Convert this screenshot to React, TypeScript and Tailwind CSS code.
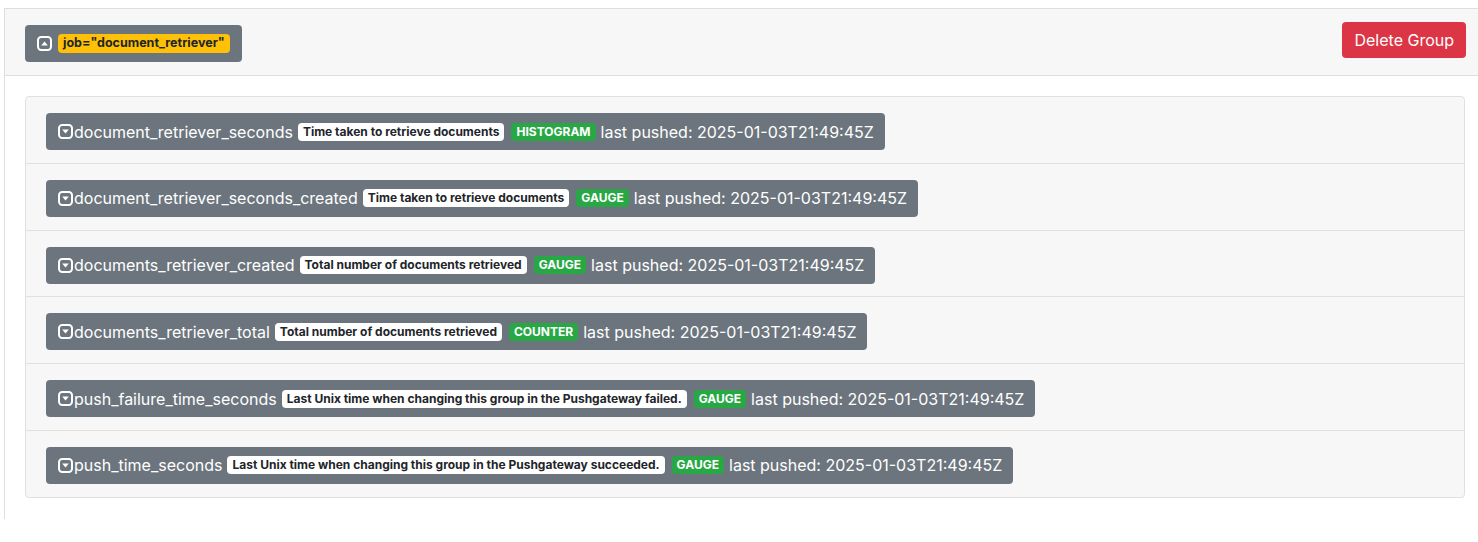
import React from "react";

const font = { fontFamily: 'Inter, "Liberation Sans", Arial, sans-serif' };

function CaretSquare({ up = false }: { up?: boolean }) {
  return (
    <svg width="15" height="15" viewBox="0 0 15 15" className="inline-block shrink-0">
      <rect x="1" y="1" width="13" height="13" rx="3.2" ry="3.2" fill="none" stroke="white" strokeWidth="2" />
      {up ? (
        <path d="M4.2 9.6 L7.5 5.6 L10.8 9.6 Z" fill="white" />
      ) : (
        <path d="M4.2 5.6 L7.5 9.6 L10.8 5.6 Z" fill="white" />
      )}
    </svg>
  );
}

type Metric = { name: string; help: string; type: string };

const metrics: Metric[] = [
  { name: "document_retriever_seconds", help: "Time taken to retrieve documents", type: "HISTOGRAM" },
  { name: "document_retriever_seconds_created", help: "Time taken to retrieve documents", type: "GAUGE" },
  { name: "documents_retriever_created", help: "Total number of documents retrieved", type: "GAUGE" },
  { name: "documents_retriever_total", help: "Total number of documents retrieved", type: "COUNTER" },
  { name: "push_failure_time_seconds", help: "Last Unix time when changing this group in the Pushgateway failed.", type: "GAUGE" },
  { name: "push_time_seconds", help: "Last Unix time when changing this group in the Pushgateway succeeded.", type: "GAUGE" },
];

export default function App() {
  return (
    <div className="w-[1478px] h-[542px] overflow-hidden bg-white text-[#212529]" style={font}>
      <div className="mt-2 ml-1 w-[1482px] border-l border-t border-[#dedede]">
        <div className="h-[67px] bg-[#f7f7f7] border-b border-[#dedede] flex justify-between items-start px-5">
          <div className="mt-4 h-[37px] inline-flex items-center gap-[6px] px-3 rounded bg-[#6c757d] text-white text-base">
            <CaretSquare up />
            <span className="inline-block bg-[#ffc107] text-[#212529] text-[12.5px] font-bold leading-none px-[5px] py-[3px] rounded">
              job="document_retriever"
            </span>
          </div>
          <button className="mt-[13px] h-[36px] px-3 rounded bg-[#dc3545] text-white text-base leading-6">
            Delete Group
          </button>
        </div>
        <div className="p-5 pb-[21px]">
          <div className="w-[1440px] rounded border border-[#e0e0e0] bg-[#f7f7f7]">
            {metrics.map((m, i) => (
              <div
                key={m.name}
                className={
                  "px-5 pt-4 pb-[12.8px] " + (i < metrics.length - 1 ? "border-b border-[#e0e0e0]" : "")
                }
              >
                <div className="h-[37px] inline-flex items-center pl-3 pr-[11px] rounded bg-[#6c757d] text-white text-base leading-6 whitespace-nowrap">
                  <CaretSquare />
                  <span className="ml-px">{m.name}</span>
                  <span className="ml-[5px] inline-block bg-white text-[#212529] text-xs font-bold leading-none px-[5px] py-[3px] rounded">
                    {m.help}
                  </span>
                  <span className="ml-[7px] inline-block bg-[#28a745] text-white text-xs font-bold leading-none px-[5px] py-[3px] rounded">
                    {m.type}
                  </span>
                  <span className="ml-[5px]">last pushed: 2025-01-03T21:49:45Z</span>
                </div>
              </div>
            ))}
          </div>
        </div>
      </div>
    </div>
  );
}
